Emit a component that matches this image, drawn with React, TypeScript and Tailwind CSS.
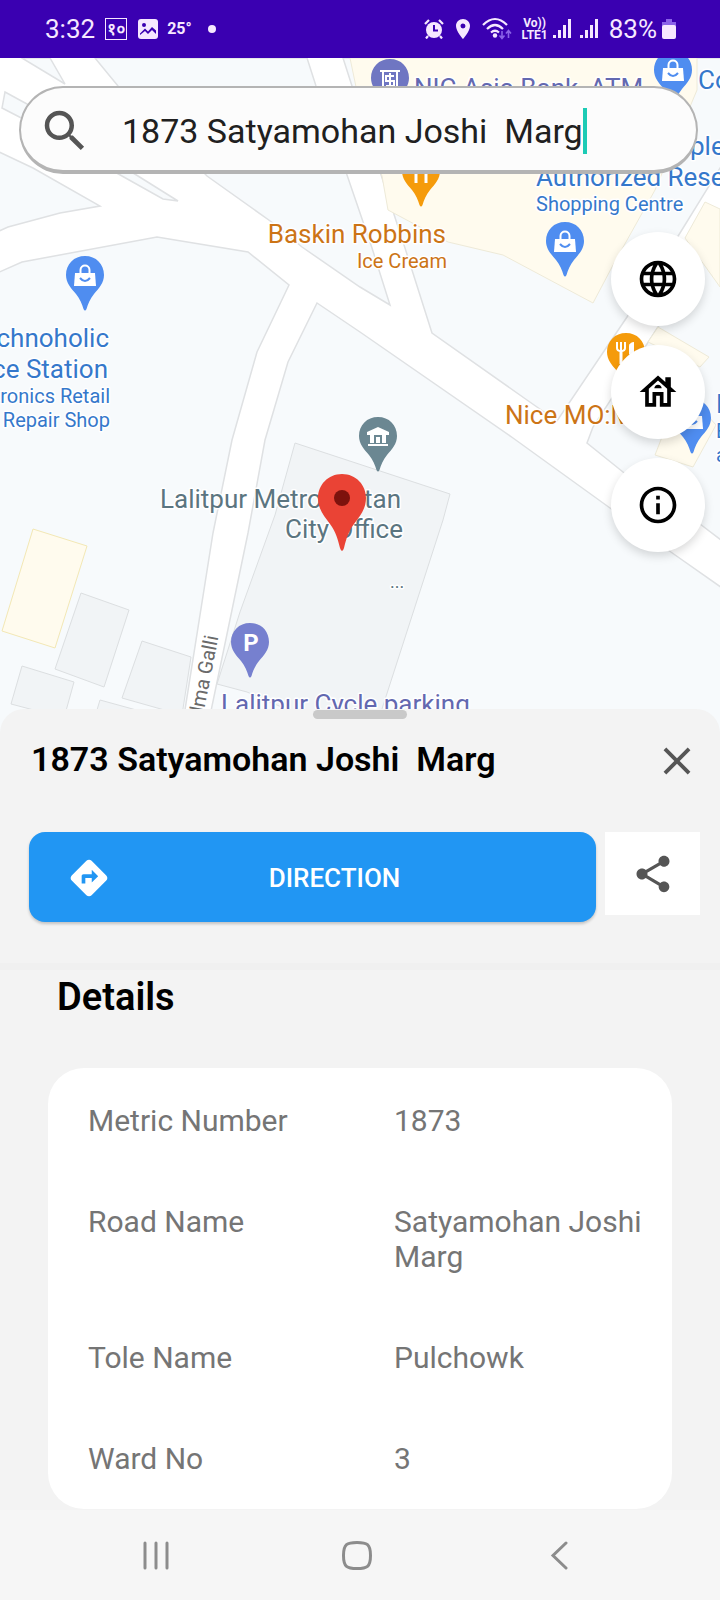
import type { ReactNode } from "react";
import {
  MdClose,
  MdDirections,
  MdInfoOutline,
  MdLanguage,
  MdLocationOn,
  MdOutlineHouse,
  MdSearch,
  MdShare,
} from "react-icons/md";

const details = [
  { label: "Metric Number", value: "1873" },
  { label: "Road Name", value: "Satyamohan Joshi Marg" },
  { label: "Tole Name", value: "Pulchowk" },
  { label: "Ward No", value: "3" },
];

function SignalBars() {
  return (
    <svg viewBox="0 0 19 20" className="h-5 w-[19px]" fill="currentColor" aria-hidden="true">
      <rect x="0" y="16" width="3" height="3" />
      <rect x="5" y="11" width="3" height="8" />
      <rect x="10" y="6" width="3" height="13" />
      <rect x="15" y="0" width="3" height="19" />
    </svg>
  );
}

function StatusBar() {
  return (
    <header className="flex h-[58px] shrink-0 items-center justify-between bg-[#3a00b1] pr-11 pl-[45px] text-[#f6e8ff]">
      <div className="flex items-center">
        <span className="text-[26px] leading-8">3:32</span>
        <span className="ml-[10px] flex h-[22px] w-[22px] items-center justify-center border border-current font-['Noto_Sans','Noto_Sans_Devanagari',sans-serif] text-[17px] leading-5 font-semibold">
          १०
        </span>
        <svg viewBox="0 0 20 20" className="ml-[11px] h-5 w-5" aria-hidden="true">
          <rect x="0" y="0" width="20" height="20" rx="3" fill="currentColor" />
          <circle cx="6" cy="6" r="2" fill="#3a00b1" />
          <path d="M2 14.500 L7 9.500 L10 12.500 L14 8 L18 11.500 V16 H2Z" fill="#3a00b1" />
          <path d="M2 16 L7 12 L10 15 L14 11 L18 15 V18 H2Z" fill="currentColor" />
        </svg>
        <span className="ml-[9px] text-[16px] leading-6 font-bold">25°</span>
        <span className="ml-4 h-2 w-2 rounded-full bg-current" />
      </div>
      <div className="flex items-center">
        <svg viewBox="0 0 20 20" className="h-5 w-5" fill="none" stroke="currentColor" aria-hidden="true">
          <circle cx="10" cy="11" r="8" fill="currentColor" stroke="none" />
          <path d="M1 5 L5 1 M15 1 L19 5 M4 17 L2 19.500 M16 17 L18 19.500" strokeWidth="2.200" />
          <path d="M10 6 V11.500 H14" stroke="#3a00b1" strokeWidth="2" />
        </svg>
        <MdLocationOn className="ml-[7px] h-6 w-6" />
        <svg viewBox="0 0 30 24" className="ml-[7px] h-6 w-[30px]" fill="none" aria-hidden="true">
          <path d="M1 8 Q13 -4 25 8 M5 12 Q13 4 21 12 M9 15.500 Q13 12 17 15.500" stroke="currentColor" strokeWidth="2.200" />
          <circle cx="13" cy="18.500" r="2.200" fill="currentColor" />
          <path d="M20 14 V21 M17.500 18.500 L20 21.500 L22.500 18.500 M26.500 21 V14 M24 16.500 L26.500 13.500 L29 16.500" stroke="#8a62e8" strokeWidth="1.600" />
        </svg>
        <span className="ml-[9px] flex flex-col items-center text-[12px] leading-3 font-bold">
          <span>Vo))</span>
          <span>LTE1</span>
        </span>
        <span className="ml-[5px] flex gap-2">
          <SignalBars />
          <SignalBars />
        </span>
        <span className="ml-[10px] text-[26px] leading-8">83%</span>
        <svg viewBox="0 0 14 20" className="ml-[5px] h-5 w-[14px]" aria-hidden="true">
          <path d="M4 0 H10 V3 H14 V8 H0 V3 H4Z" fill="#8a62e8" />
          <rect x="0" y="6" width="14" height="14" rx="2" fill="currentColor" />
        </svg>
      </div>
    </header>
  );
}

function Pin({ x, y, color, children }: { x: number; y: number; color: string; children?: ReactNode }) {
  return (
    <g transform={`translate(${x} ${y})`}>
      <path
        d="M0 -19 C11 -19 19 -11 19 0 C19 8 14 13 9 19 C5 24 3 29 1.500 34 Q0 37 -1.500 34 C-3 29 -5 24 -9 19 C-14 13 -19 8 -19 0 C-19 -11 -11 -19 0 -19Z"
        fill={color}
      />
      {children}
    </g>
  );
}

function Bag() {
  return (
    <g>
      <path d="M-10 -2 H10 L11 11 H-11Z" fill="#fff" />
      <path d="M-4.500 -2 V-5 C-4.500 -11 4.500 -11 4.500 -5 V-2" fill="none" stroke="#fff" strokeWidth="2" />
      <path d="M-5 3 Q0 9 5 3" fill="none" stroke="#4f8df0" strokeWidth="2" />
    </g>
  );
}

function Cutlery() {
  return (
    <g fill="none" stroke="#fff" strokeWidth="2">
      <path d="M-9 -10 V-4 Q-9 -1 -5 -1 Q-1 -1 -1 -4 V-10 M-5 -10 V-1" />
      <path d="M-5 -2 V12" strokeWidth="3" />
      <path d="M5 12 V-8" strokeWidth="3" />
      <path d="M3 2 V-6 Q4 -10 8 -10 V2Z" fill="#fff" stroke="none" />
    </g>
  );
}

function MapCanvas() {
  return (
    <svg
      viewBox="0 58 720 675"
      preserveAspectRatio="xMidYMin slice"
      className="absolute inset-0 h-full w-full"
      role="img"
      aria-label="Map around Lalitpur Metropolitan City Office"
    >
      <rect x="0" y="58" width="720" height="675" fill="#fff" />
      <g fill="#f7fafc" stroke="#dfe1e3" strokeWidth="1.500">
        <path d="M22 58 L65 84 L50 58Z" />
        <path d="M5 92 L60 122 V138 L2 108Z" />
        <path d="M95 58 L118 86 L207 176 L273 223 L302 247 L360 287 L390 305 L372 248 L347 175 L316 86 L307 58Z" />
        <path d="M-5 150 L33 168 L100 206 L60 213 L8 227 L-5 233Z" />
        <path d="M90 158 L122 176 L163 199 L178 201 L138 176 L112 160Z" />
        <path d="M-5 274 L22 262 L157 237 L248 252 L289 285 L257 352 L232 440 L213 533 L181 735 H-5Z" />
        <path d="M317 303 L288 362 L265 440 L248 533 L206 735 H725 V590 L668 550 L610 508 L513 438 L360 332Z" />
        <path d="M343 58 L352 86 L405 248 L432 333 L527 400 L557 421 L627 317 L680 233 L725 160 V58Z" />
        <path d="M593 427 L587 443 L623 472 L700 524 L725 543 V215 L658 327Z" />
      </g>
      <g fill="#fffbee" stroke="#eeead8" strokeWidth="1">
        <path d="M350 58 L365 130 L382 176 L388 210 L448 242 L503 255 L593 303 L612 267 L655 190 L697 90 V58Z" />
        <path d="M705 202 L685 238 L720 287 V209Z" />
        <path d="M658 327 L709 357 L700 367 L648 342Z" />
        <path d="M685 390 L662 437 L655 455 L693 467 L716 425Z" />
        <path d="M33 529 L87 546 L55 648 L2 631Z" stroke="#f3e8b5" />
      </g>
      <g fill="#f1f4f6" stroke="#dcdfe1" strokeWidth="1">
        <path d="M295 443 L450 494 L443 520 L380 715 H300 L247 692 L217 684 L240 612 L275 515Z" />
        <path d="M81 593 L129 610 L104 687 L55 669Z" />
        <path d="M142 641 L191 657 L182 715 L122 698Z" />
        <path d="M22 666 L74 682 L64 718 L11 704Z" />
        <path d="M100 700 L140 711 L135 733 H90Z" />
      </g>

      <Pin x={390} y={78} color="#6f76c2">
        <path d="M-10 -7 H10 M-7 -7 V12 M7 -7 V12 M4 -2 H-4 V3 H4 V8 H-4 M0 -5 V11" stroke="#fff" strokeWidth="2" fill="none" />
      </Pin>
      <Pin x={673} y={70} color="#4f8df0">
        <Bag />
      </Pin>
      <Pin x={421} y={171} color="#f59b0b">
        <Cutlery />
      </Pin>
      <Pin x={565} y={241} color="#4f8df0">
        <Bag />
      </Pin>
      <Pin x={85} y={275} color="#4f8df0">
        <Bag />
      </Pin>
      <Pin x={626} y={352} color="#f59b0b">
        <Cutlery />
      </Pin>
      <Pin x={692} y={418} color="#4f8df0">
        <Bag />
      </Pin>
      <Pin x={378} y={436} color="#6b8792">
        <path d="M-11 -4 L0 -9 L11 -4 V-1 H-11Z M-8 -1 H-4 V7 H-8Z M-2 1 H2 V7 H-2Z M4 -1 H8 V7 H4Z M-10 8 H10 V10 H-10Z" fill="#fff" />
      </Pin>
      <Pin x={250} y={642} color="#7680cf">
        <text x="1" y="9" textAnchor="middle" fill="#fff" className="text-[24px] font-bold">
          P
        </text>
      </Pin>

      <g stroke="#fff" strokeWidth="3" strokeLinejoin="round" paintOrder="stroke" className="text-[26px]">
        <g fill="#3578cb">
          <text x="698" y="89">Computer</text>
          <text x="690" y="155">ple</text>
          <text x="536" y="186">Authorized Reseller</text>
          <text x="536" y="211" className="text-[20px]">Shopping Centre</text>
          <text x="109" y="347" textAnchor="end">Technoholic</text>
          <text x="108" y="378" textAnchor="end">Service Station</text>
          <text x="110" y="403" textAnchor="end" className="text-[20px]">Electronics Retail</text>
          <text x="110" y="427" textAnchor="end" className="text-[20px]">And Repair Shop</text>
          <text x="716" y="413">E</text>
          <text x="716" y="438" className="text-[20px]">E</text>
          <text x="716" y="462" className="text-[20px]">a</text>
        </g>
        <g fill="#cc7416">
          <text x="446" y="243" textAnchor="end">Baskin Robbins</text>
          <text x="447" y="268" textAnchor="end" className="text-[20px]">Ice Cream</text>
          <text x="505" y="424">Nice MO:MO</text>
        </g>
        <g fill="#5b7580">
          <text x="401" y="508" textAnchor="end">Lalitpur Metropolitan</text>
          <text x="403" y="538" textAnchor="end">City Office</text>
          <text x="390" y="588" className="text-[18px]">...</text>
        </g>
        <g fill="#6368b0">
          <text x="414" y="97">NIC Asia Bank, ATM</text>
          <text x="221" y="713">Lalitpur Cycle parking</text>
        </g>
        <text transform="translate(198 742) rotate(-79)" fill="#6a6a6a" className="text-[20px]">
          Padma Galli
        </text>
      </g>

      <path
        d="M342 474 C356 474 366 485 366 498 C366 509 360 516 354 524 C348 532 346 540 344 548 Q342 554 340 548 C338 540 336 532 330 524 C324 516 318 509 318 498 C318 485 328 474 342 474Z"
        fill="#ea4335"
      />
      <circle cx="342" cy="498" r="8" fill="#7d120d" />
    </svg>
  );
}

function SearchBar() {
  return (
    <label className="flex h-[88px] items-center overflow-hidden rounded-full border-2 border-b-4 border-[#b4b4b4] bg-[#fcfcfc] pt-[3px] pl-[17px]">
      <MdSearch className="h-[54px] w-[54px] shrink-0 text-[#555]" aria-hidden="true" />
      <input
        type="text"
        defaultValue="1873 Satyamohan Joshi  Marg"
        aria-label="Search address"
        className="ml-[30px] field-sizing-content min-w-0 bg-transparent text-[34px] leading-10 text-[#202020] outline-none"
      />
      <span className="h-[46px] w-1 shrink-0 bg-[#1ccbb5]" />
    </label>
  );
}

function MapButton({ label, children }: { label: string; children: ReactNode }) {
  return (
    <button
      type="button"
      aria-label={label}
      className="flex h-[94px] w-[94px] items-center justify-center rounded-full bg-white text-black shadow-[0_4px_10px_rgba(0,0,0,0.15)]"
    >
      {children}
    </button>
  );
}

function NavBar() {
  return (
    <nav className="flex h-[90px] shrink-0 items-center justify-around bg-[#f6f6f6] pr-[60px] pl-[55px] text-[#8c8c8c]">
      <button type="button" aria-label="Recent apps" className="flex w-20 justify-center">
        <svg viewBox="0 0 28 40" className="h-10 w-7" stroke="currentColor" strokeWidth="3" strokeLinecap="round" fill="none">
          <path d="M3 8 V33 M14 8 V33 M25 8 V33" />
        </svg>
      </button>
      <button type="button" aria-label="Home" className="flex w-20 justify-center">
        <svg viewBox="0 0 30 40" className="h-10 w-[30px]" stroke="currentColor" strokeWidth="3" fill="none">
          <path d="M15 7.500 C25 7.500 28.500 9 28.500 20.500 C28.500 32 25 33.500 15 33.500 C5 33.500 1.500 32 1.500 20.500 C1.500 9 5 7.500 15 7.500Z" />
        </svg>
      </button>
      <button type="button" aria-label="Back" className="flex w-20 justify-center">
        <svg viewBox="0 0 18 40" className="h-10 w-[18px]" stroke="currentColor" strokeWidth="3" strokeLinecap="round" fill="none">
          <path d="M16 8 L3 20.500 L16 33" />
        </svg>
      </button>
    </nav>
  );
}

export default function App() {
  return (
    <div className="flex min-h-screen flex-col overflow-x-hidden bg-[#f3f3f3] font-[Roboto,sans-serif]">
      <StatusBar />

      <main className="flex flex-1 flex-col">
        <section className="relative min-h-[560px] flex-1 overflow-hidden">
          <MapCanvas />
          <div className="relative flex flex-col pt-7 pr-[22px] pl-[19px]">
            <SearchBar />
            <div className="mt-[58px] -mr-[7px] flex flex-col gap-[19px] self-end">
              <MapButton label="Change map layer">
                <MdLanguage className="h-11 w-11" />
              </MapButton>
              <MapButton label="Home">
                <MdOutlineHouse className="h-11 w-11" />
              </MapButton>
              <MapButton label="Information">
                <MdInfoOutline className="h-11 w-11" />
              </MapButton>
            </div>
          </div>
        </section>

        <section className="relative -mt-6 rounded-t-3xl bg-[#f3f3f3] pt-px">
          <div className="mx-auto h-[9px] w-[94px] rounded-full bg-[#c9c9c9]" />
          <div className="flex h-[84px] items-center justify-between pr-5 pl-[31px]">
            <h1 className="pb-1 text-[34px] leading-10 font-semibold whitespace-pre text-black">1873 Satyamohan Joshi  Marg</h1>
            <button type="button" aria-label="Close" className="text-[#555]">
              <MdClose className="h-[46px] w-[46px]" />
            </button>
          </div>
          <div className="mt-[29px] flex items-start gap-[9px] pr-5 pl-[29px]">
            <button
              type="button"
              className="flex h-[90px] flex-1 items-center rounded-2xl bg-[#2196f3] px-[38px] pt-[2px] text-[26px] font-medium text-white shadow-[0_2px_3px_rgba(0,0,0,0.2)]"
            >
              <MdDirections className="h-11 w-11 shrink-0" />
              <span className="flex-1 text-center">DIRECTION</span>
            </button>
            <button type="button" aria-label="Share" className="flex h-[83px] w-[95px] items-center justify-center bg-white text-[#555]">
              <MdShare className="h-11 w-11" />
            </button>
          </div>
          <hr className="mt-[41px] h-[7px] border-0 bg-[#f0f0f0]" />
          <h2 className="mt-[5px] pl-[57px] text-[38px] leading-[44px] font-semibold text-black">Details</h2>
          <dl className="mx-12 mt-[49px] flex flex-col gap-[66px] rounded-[36px] bg-white pt-[35px] pr-6 pb-[33px] pl-10 text-[30px] leading-[35px] text-[#757575]">
            {details.map((item) => (
              <div key={item.label} className="grid grid-cols-[306px_1fr]">
                <dt>{item.label}</dt>
                <dd>{item.value}</dd>
              </div>
            ))}
          </dl>
          <div className="h-px" />
        </section>
      </main>

      <NavBar />
    </div>
  );
}
